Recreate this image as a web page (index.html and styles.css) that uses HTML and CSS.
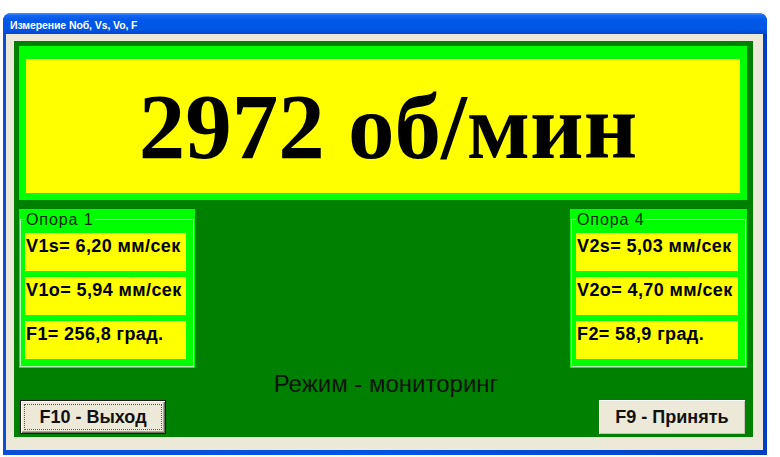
FILE: index.html
```html
<!DOCTYPE html>
<html lang="ru">
<head>
<meta charset="utf-8">
<title>Измерение Nоб, Vs, Vo, F</title>
<link rel="stylesheet" href="styles.css">
</head>
<body>
<div class="window">
  <div class="titlebar"><span class="title">Измерение Nоб, Vs, Vo, F</span></div>
  <div class="client">
    <div class="panel">
      <div class="display">
        <div class="display-inner">2972 об/мин</div>
      </div>
      <div class="mid">
        <div class="grp">
          <div class="frame">
            <span class="legend">Опора 1</span>
            <div class="row">V1s= 6,20 мм/сек</div>
            <div class="row">V1o= 5,94 мм/сек</div>
            <div class="row">F1= 256,8 град.</div>
          </div>
        </div>
        <div class="grp grp-right">
          <div class="frame">
            <span class="legend">Опора 4</span>
            <div class="row">V2s= 5,03 мм/сек</div>
            <div class="row">V2o= 4,70 мм/сек</div>
            <div class="row">F2= 58,9 град.</div>
          </div>
        </div>
      </div>
      <div class="status">Режим - мониторинг</div>
      <div class="buttons">
        <div class="btn btn-default"><span class="btn-focus">F10 - Выход</span></div>
        <div class="btn"><span class="btn-label">F9 - Принять</span></div>
      </div>
    </div>
  </div>
</div>
</body>
</html>
```

FILE: styles.css
```css
html, body {
  margin: 0;
  padding: 0;
  background: #ffffff;
  width: 780px;
  height: 457px;
  overflow: hidden;
}

.window {
  margin: 13px 0 0 3px;
  width: 764px;
  height: 442px;
  box-sizing: border-box;
  background: linear-gradient(90deg, #0a4fd6 0%, #0054e3 50%, #0040c0 100%);
  border-radius: 8px 8px 0 0;
  display: flex;
  flex-direction: column;
}

.titlebar {
  height: 21px;
  flex: none;
  border-radius: 8px 8px 0 0;
  background: linear-gradient(180deg, #4a98ff 0%, #1566f2 12%, #0058e8 35%, #0056e5 75%, #0049d0 100%);
  display: flex;
  align-items: center;
  padding-left: 7px;
}

.title {
  font-family: "Liberation Sans", Arial, sans-serif;
  font-weight: bold;
  font-size: 10.5px;
  color: #ffffff;
  letter-spacing: -0.1px;
  padding-top: 2px;
}

.client {
  flex: 1;
  margin: 0 4px 5px 3px;
  background: #ece9d8;
  padding: 7px 0 0 8px;
}

.panel {
  width: 739px;
  height: 396px;
  box-sizing: border-box;
  background: #008000;
  padding: 5px 6px 0 5px;
  display: flex;
  flex-direction: column;
}

.display {
  height: 154px;
  box-sizing: border-box;
  background: #00ff00;
  padding: 13px 7px 7px 7px;
  display: flex;
}

.display-inner {
  flex: 1;
  background: #ffff00;
  display: flex;
  align-items: center;
  justify-content: center;
  padding-left: 10px;
  font-family: "Liberation Serif", "Times New Roman", serif;
  font-weight: bold;
  font-size: 93px;
  color: #000000;
}

.mid {
  margin-top: 9px;
  display: flex;
  justify-content: space-between;
}

.grp {
  width: 176px;
  height: 159px;
  box-sizing: border-box;
  background: #00ff00;
  padding: 10px 1px 1px 1px;
  display: flex;
}

.grp-right {
  width: 177px;
}

.frame {
  flex: 1;
  position: relative;
  border: 1px solid #b8f5b8;
  padding: 13px 7px 0 4px;
  display: flex;
  flex-direction: column;
  gap: 6px;
}

.legend {
  position: absolute;
  top: -8px;
  left: 4px;
  background: #00ff00;
  padding: 0 1px;
  font-family: "Liberation Sans", Arial, sans-serif;
  font-size: 16px;
  line-height: 16px;
  letter-spacing: 0.9px;
  color: #062806;
}

.row {
  height: 38px;
  box-sizing: border-box;
  background: #ffff00;
  padding: 3px 0 0 1px;
  font-family: "Liberation Sans", Arial, sans-serif;
  font-weight: bold;
  font-size: 18px;
  line-height: 21px;
  letter-spacing: 0.4px;
  color: #000000;
  white-space: nowrap;
}

.status {
  margin-top: 2px;
  height: 28px;
  line-height: 28px;
  text-align: center;
  padding-left: 6px;
  font-family: "Liberation Sans", Arial, sans-serif;
  font-size: 24px;
  color: #0a140a;
}

.buttons {
  margin-top: 2px;
  display: flex;
  justify-content: space-between;
  padding: 0 2px 0 1px;
}

.btn {
  width: 146px;
  height: 34px;
  box-sizing: border-box;
  background: #ece9d8;
  box-shadow: inset 1px 1px 0 #ffffff, inset -1px -1px 0 #c9c5b5;
  display: flex;
  font-family: "Liberation Sans", Arial, sans-serif;
  font-weight: bold;
  font-size: 18px;
  color: #111111;
}

.btn-default {
  border: 1px solid #1a1a1a;
  box-shadow: inset 1px 1px 0 #ffffff, inset -1px -1px 0 #716f64, inset -2px -2px 0 #aca899;
}

.btn-focus {
  flex: 1;
  margin: 3px;
  border: 1px dotted #555555;
  display: flex;
  align-items: center;
  justify-content: center;
}

.btn-label {
  flex: 1;
  display: flex;
  align-items: center;
  justify-content: center;
}
```
